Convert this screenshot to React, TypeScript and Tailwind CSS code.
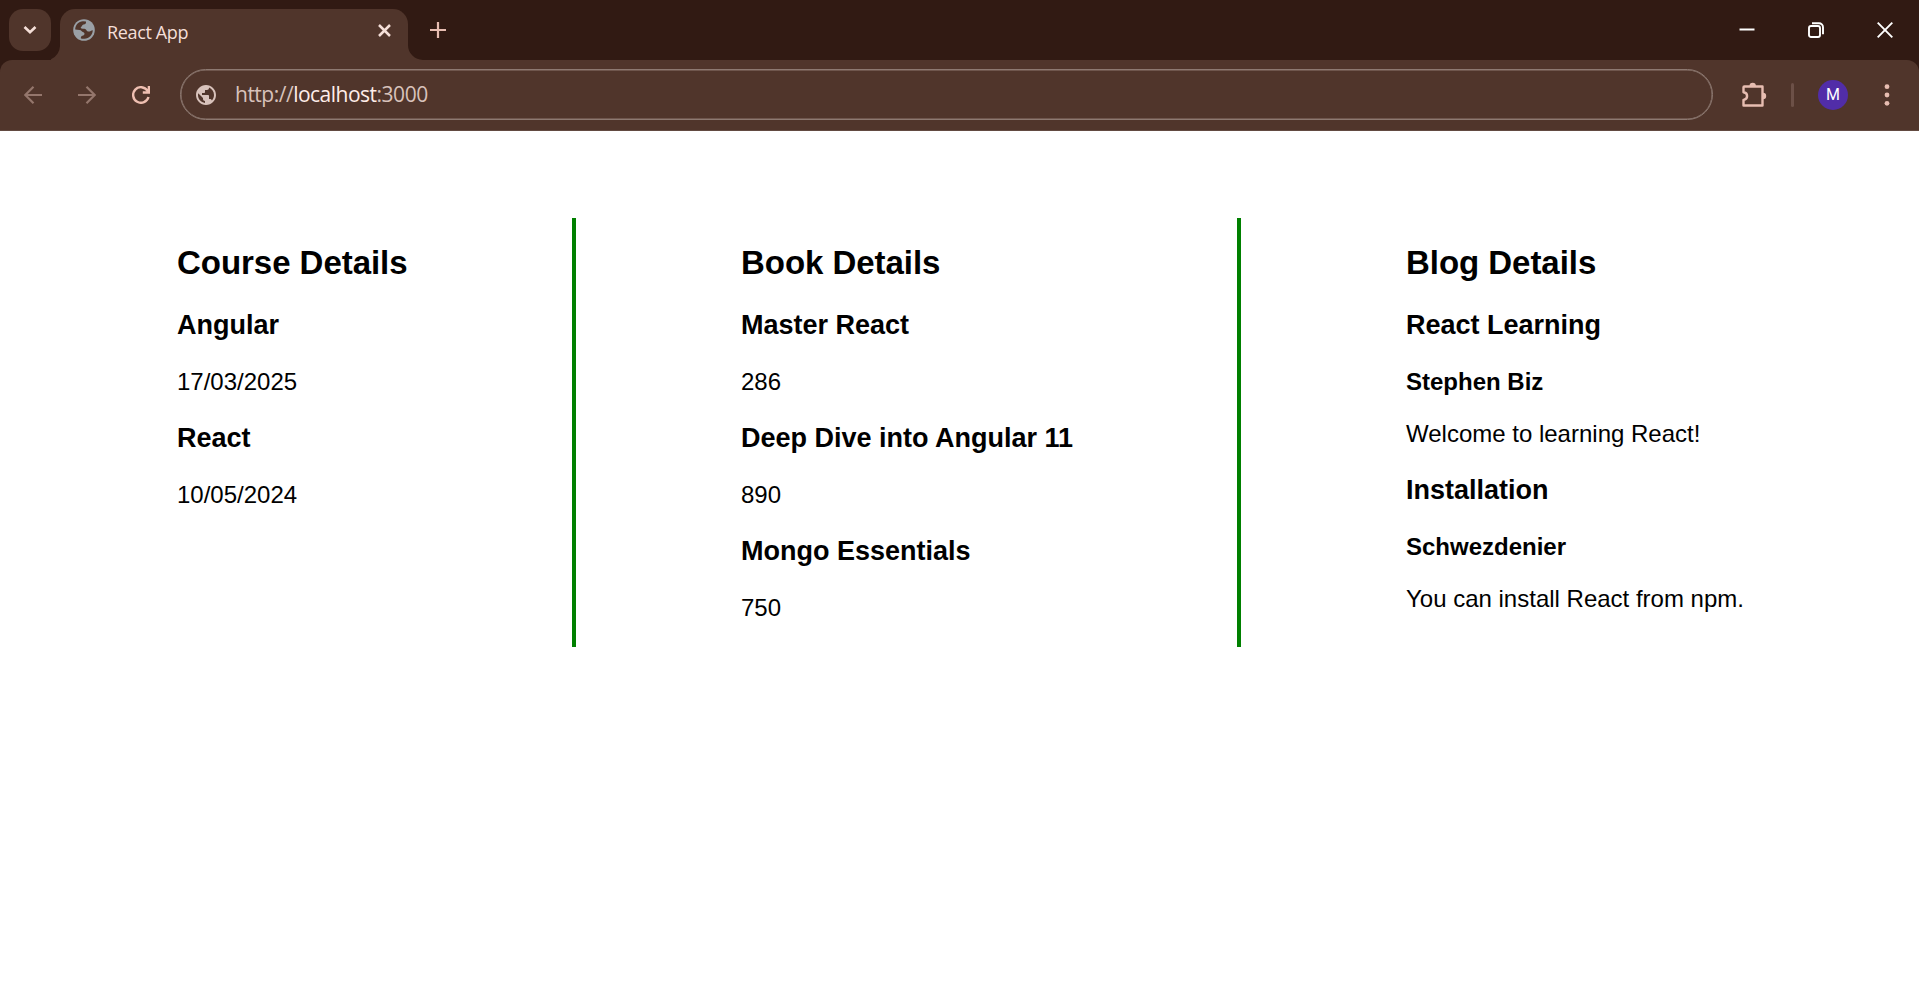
import React from "react";

type Line = { kind: "h3" | "h4" | "p"; text: string };

const courses: Line[] = [
  { kind: "h3", text: "Angular" },
  { kind: "p", text: "17/03/2025" },
  { kind: "h3", text: "React" },
  { kind: "p", text: "10/05/2024" },
];
const books: Line[] = [
  { kind: "h3", text: "Master React" },
  { kind: "p", text: "286" },
  { kind: "h3", text: "Deep Dive into Angular 11" },
  { kind: "p", text: "890" },
  { kind: "h3", text: "Mongo Essentials" },
  { kind: "p", text: "750" },
];
const blogs: Line[] = [
  { kind: "h3", text: "React Learning" },
  { kind: "h4", text: "Stephen Biz" },
  { kind: "p", text: "Welcome to learning React!" },
  { kind: "h3", text: "Installation" },
  { kind: "h4", text: "Schwezdenier" },
  { kind: "p", text: "You can install React from npm." },
];

function Column({ title, lines, className }: { title: string; lines: Line[]; className: string }) {
  return (
    <section className={`h-[429px] shrink-0 whitespace-nowrap pt-[26px] ${className}`}>
      <h2 className="mb-[28px] text-[33px] font-bold leading-[38px] tracking-[-0.04px]">{title}</h2>
      {lines.map((l, i) => {
        if (l.kind === "h3")
          return <h3 key={i} className={`text-[27px] font-bold leading-[31px] ${i === 0 ? "" : "mt-[27px]"}`}>{l.text}</h3>;
        if (l.kind === "h4")
          return <h4 key={i} className="mt-[27px] text-[24px] font-bold leading-[28px]">{l.text}</h4>;
        const afterH4 = i > 0 && lines[i - 1].kind === "h4";
        return (
          <p key={i} className={`text-[24px] leading-[28px] ${afterH4 ? "mt-[24px]" : "mt-[27px]"}`}>{l.text}</p>
        );
      })}
    </section>
  );
}

const globePath =
  "M12 2C6.48 2 2 6.48 2 12s4.48 10 10 10 10-4.48 10-10S17.52 2 12 2zm-1 17.93c-3.95-.49-7-3.85-7-7.93 0-.62.08-1.21.21-1.79L9 15v1c0 1.1.9 2 2 2v1.93zm6.9-2.54c-.26-.81-1-1.39-1.9-1.39h-1v-3c0-.55-.45-1-1-1H8v-2h2c.55 0 1-.45 1-1V7h2c1.1 0 2-.9 2-2v-.41c2.93 1.19 5 4.06 5 7.41 0 2.08-.8 3.97-2.1 5.39z";

function TabStrip() {
  return (
    <div className="flex h-[60px] bg-[#311a13]">
      <button className="ml-[9px] mt-[9px] flex h-[42px] w-[42px] items-center justify-center rounded-[14px] bg-[#50352b]">
        <svg width="14" height="10" viewBox="0 0 14 10" fill="none" stroke="#f5dfd8" strokeWidth="2.6"><path d="M1.5 2l5.5 5.3L12.500 2" /></svg>
      </button>
      <svg className="mt-[45px] shrink-0" width="9" height="15" viewBox="0 0 9 15"><path d="M9 0A15 15 0 0 1 0 14.200V15H9Z" fill="#50352b" /></svg>
      <div className="mt-[9px] flex h-[51px] w-[348px] items-center rounded-t-[15px] bg-[#50352b] pb-[9px]">
        <svg className="ml-[13px]" width="22" height="22" viewBox="0 0 22 22">
          <circle cx="11" cy="11" r="10.800" fill="#9aa0a6" />
          <path d="M2.200 10.500C2.200 6 5.500 2.600 10 2.200L13 2.600C13.200 4.500 12.500 5.500 10.500 5.600C8.800 5.800 9.300 7.600 7.800 8.200C7.300 9.600 9 9.600 11.500 9.800C13.500 10 13.300 12.300 15 12.500C17.500 12.600 18 11.600 19.800 11.200C19.600 16 16 19.400 11.500 19.800C9.800 19.900 8.300 19.500 7.800 19.200C7.800 17 8.800 16.800 10.300 16.500C12 16 11.800 13.800 10.500 13.300C8.500 12.800 8.600 11.200 6.500 11Z" fill="#50352b" />
        </svg>
        <span className="ml-[12px] mt-[4px] font-['Open_Sans',sans-serif] text-[18px] tracking-[-0.35px] text-[#f5dfd8]">React App</span>
        <svg className="ml-auto mr-[17px]" width="13" height="13" viewBox="0 0 13 13" stroke="#f5dfd8" strokeWidth="2.500"><path d="M1 1l11 11M12 1L1 12" /></svg>
      </div>
      <svg className="mt-[45px] shrink-0" width="15" height="15" viewBox="0 0 15 15"><path d="M0 0A15 15 0 0 0 15 15H0Z" fill="#50352b" /></svg>
      <svg className="ml-[7px] mt-[22px]" width="16" height="16" viewBox="0 0 16 16" stroke="#e7bdb1" strokeWidth="2.200"><path d="M8 0v16M0 8h16" /></svg>
      <div className="ml-auto flex h-[59px] items-center">
        <svg className="mr-[53px]" width="16" height="16" viewBox="0 0 16 16"><path d="M.500 6.500h15v2h-15z" fill="#fff" /></svg>
        <svg className="mr-[53px]" width="16" height="16" viewBox="0 0 16 16" fill="none" stroke="#fff" strokeWidth="1.900"><rect x="1" y="4" width="11" height="11" rx="2" /><path d="M4 1.200h7a4 4 0 0 1 4 4v7" /></svg>
        <svg className="mr-[26px]" width="16" height="16" viewBox="0 0 16 16" stroke="#fff" strokeWidth="1.900"><path d="M.7.700l14.600 14.600M15.300.7L.7 15.300" /></svg>
      </div>
    </div>
  );
}

function Toolbar() {
  return (
    <div className="bg-[#311a13]">
      <div className="flex h-[71px] items-center rounded-t-[12px] border-b border-[#624a41] bg-[#50352b]">
        <svg className="ml-[24px]" width="18" height="18" viewBox="0 0 18 18" fill="none" stroke="#94766c" strokeWidth="2.200"><path d="M18 9H1.500M9.500.800L1.300 9l8.200 8.200" /></svg>
        <svg className="ml-[36px]" width="18" height="18" viewBox="0 0 18 18" fill="none" stroke="#94766c" strokeWidth="2.200"><path d="M0 9h16.500M8.500.800L16.700 9l-8.200 8.200" /></svg>
        <svg className="ml-[36px]" width="18" height="18" viewBox="0 0 18 18" fill="none" stroke="#efbfb1" strokeWidth="2.400"><path d="M16.500 11A7.800 7.800 0 1 1 15.500 4.700L16.900 6.300M16.900 0v6.500H10.800" /></svg>
        <div className="mb-px ml-[30px] flex h-[51px] w-[1533px] items-center rounded-full border border-[#8d7971] pl-[13px] shadow-[inset_0_0_0_0.5px_#8d7971]">
          <svg width="24" height="24" viewBox="0 0 24 24"><path d={globePath} fill="#d8c2bb" /></svg>
          <span className="ml-[17px] font-['Open_Sans',sans-serif] text-[21px] tracking-[-0.5px] text-[#d8c2bb]">http://<span className="text-[#ffede8]">localhost</span>:3000</span>
        </div>
        <svg className="mb-px ml-[28px]" width="26" height="26" viewBox="0 0 26 26" fill="none" stroke="#e7bdb1" strokeWidth="2.400" strokeLinejoin="round"><path d="M3.300 4.500H21.500V23.500H2.500V17.900C7.300 17.300 7.300 10.900 2.500 10.300V5.300Q2.500 4.500 3.300 4.500Z" /><path d="M8.500 4a3.200 3.200 0 0 1 6.400 0zM22 10.800a3.200 3.200 0 0 1 0 6.400z" fill="#e7bdb1" stroke="none" /></svg>
        <div className="ml-[24px] h-[24px] w-[3px] rounded bg-[#6c5047]" />
        <div className="ml-[24px] flex h-[30px] w-[30px] items-center justify-center rounded-full bg-[#512da8] font-['Roboto',sans-serif] text-[16px] text-white">M</div>
        <svg className="ml-[36px]" width="6" height="24" viewBox="0 0 6 24" fill="#e7bdb1"><circle cx="3" cy="3.700" r="2.400" /><circle cx="3" cy="12" r="2.400" /><circle cx="3" cy="20.300" r="2.400" /></svg>
      </div>
    </div>
  );
}

export default function App() {
  return (
    <div className="h-[983px] w-[1919px] overflow-hidden bg-white">
      <TabStrip />
      <Toolbar />
      <main className="flex pt-[87px] font-['Liberation_Sans',sans-serif] text-black">
        <Column title="Course Details" lines={courses} className="w-[576px] border-r-4 border-[#008000] pl-[177px]" />
        <Column title="Book Details" lines={books} className="w-[665px] border-r-4 border-[#008000] pl-[165px]" />
        <Column title="Blog Details" lines={blogs} className="pl-[165px]" />
      </main>
    </div>
  );
}
